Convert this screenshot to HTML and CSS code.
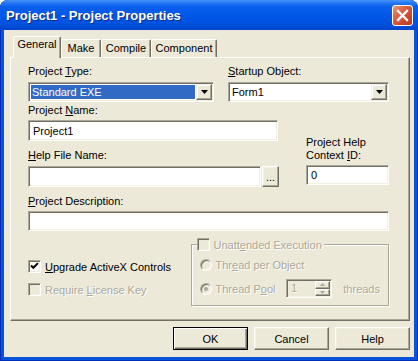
FILE: index.html
```html
<!DOCTYPE html>
<html lang="en">
<head>
    <meta charset="UTF-8">
    <title>Project1 - Project Properties</title>
    <link rel="stylesheet" href="styles.css">
</head>
<body>
<div class="window">
    <div class="titlebar">
        <span class="title">Project1 - Project Properties</span>
        <span class="close">
            <svg width="19" height="19" viewBox="0 0 19 19">
                <path d="M5 5 L14 14 M14 5 L5 14" stroke="#fff" stroke-width="2.3" stroke-linecap="square"/>
            </svg>
        </span>
    </div>

    <div class="client">
        <div class="tabs">
            <div class="tab active tab-general">General</div>
            <div class="tab tab-make">Make</div>
            <div class="tab tab-compile">Compile</div>
            <div class="tab tab-component">Component</div>
        </div>

        <div class="panel">
            <div class="top-row">
                <div class="type-field">
                    <span class="label">Project <u>T</u>ype:</span>
                    <div class="combo sunken">
                        <div class="combo-value selected">Standard EXE</div>
                        <div class="combo-arrow raised">
                            <svg width="7" height="4" viewBox="0 0 7 4"><path d="M0 0 H7 L3.5 4 Z" fill="#000"/></svg>
                        </div>
                    </div>
                </div>
                <div class="startup-field">
                    <span class="label"><u>S</u>tartup Object:</span>
                    <div class="combo sunken">
                        <div class="combo-value">Form1</div>
                        <div class="combo-arrow raised">
                            <svg width="7" height="4" viewBox="0 0 7 4"><path d="M0 0 H7 L3.5 4 Z" fill="#000"/></svg>
                        </div>
                    </div>
                </div>
            </div>

            <div class="mid-row">
                <div class="name-col">
                    <span class="label">Project <u>N</u>ame:</span>
                    <div class="textbox sunken name-box">Project1</div>
                    <span class="label help-label"><u>H</u>elp File Name:</span>
                    <div class="help-row">
                        <div class="textbox sunken help-box"></div>
                        <div class="browse raised">...</div>
                    </div>
                </div>
                <div class="context-col">
                    <span class="label two-lines">Project Help<br>Context <u>I</u>D:</span>
                    <div class="textbox sunken context-box">0</div>
                </div>
            </div>

            <span class="label desc-label"><u>P</u>roject Description:</span>
            <div class="textbox sunken desc-box"></div>

            <div class="bottom-row">
                <div class="checks">
                    <div class="check-row">
                        <span class="checkbox sunken">
                            <svg width="9" height="9" viewBox="0 0 9 9"><path d="M1 3.5 L3.3 5.8 L8 1.1" fill="none" stroke="#000" stroke-width="2"/></svg>
                        </span>
                        <span><u>U</u>pgrade ActiveX Controls</span>
                    </div>
                    <div class="check-row disabled">
                        <span class="checkbox sunken off"></span>
                        <span>Require <u>L</u>icense Key</span>
                    </div>
                </div>

                <fieldset class="frame">
                    <legend>
                        <span class="legend-inner disabled">
                            <span class="checkbox sunken off"></span>
                            <span>Unatt<u>e</u>nded Execution</span>
                        </span>
                    </legend>
                    <div class="radio-row disabled">
                        <span class="radio"></span>
                        <span>Thr<u>e</u>ad per Object</span>
                    </div>
                    <div class="radio-row pool-row disabled">
                        <span class="radio on"></span>
                        <span class="pool-label">Thread P<u>o</u>ol</span>
                        <div class="spin sunken">
                            <span class="spin-value">1</span>
                            <span class="spin-buttons">
                                <span class="spin-btn raised"><svg width="5" height="3" viewBox="0 0 5 3"><path d="M0 3 H5 L2.5 0 Z" fill="#ACA899"/></svg></span>
                                <span class="spin-btn raised"><svg width="5" height="3" viewBox="0 0 5 3"><path d="M0 0 H5 L2.5 3 Z" fill="#ACA899"/></svg></span>
                            </span>
                        </div>
                        <span class="threads">threads</span>
                    </div>
                </fieldset>
            </div>
        </div>

        <div class="buttons">
            <div class="btn raised default">OK</div>
            <div class="btn raised">Cancel</div>
            <div class="btn raised">Help</div>
        </div>
    </div>
</div>
</body>
</html>
```

FILE: styles.css
```css
* {
    box-sizing: border-box;
}
body {
    margin: 0;
    background: #ffffff;
    font-family: Tahoma, "Liberation Sans", sans-serif;
    font-size: 11px;
    color: #000;
}
u {
    text-decoration: underline;
}

/* window frame */
.window {
    width: 418px;
    height: 361px;
    display: flex;
    flex-direction: column;
    background: #0853DC;
    border-radius: 8px 8px 0 0;
    overflow: hidden;
    box-shadow: inset 1px 0 #0030B8, inset -1px 0 #0030B8, inset 0 -1px #0030B8;
}
.titlebar {
    height: 30px;
    flex: none;
    display: flex;
    align-items: center;
    justify-content: space-between;
    padding: 0 5px 0 6px;
    background: linear-gradient(to bottom, #4A98FA 0, #2476F4 3px, #0A5EEC 7px, #0057E6 16px, #0052DE 24px, #0045CA 30px);
}
.title {
    color: #fff;
    font: bold 13px "Liberation Sans", sans-serif;
    text-shadow: 1px 1px 0 #0A2A8C;
    padding-top: 1px;
}
.close {
    width: 21px;
    height: 21px;
    border: 1px solid #fff;
    border-radius: 3px;
    background: linear-gradient(135deg, #EB9A7A 0%, #DA6445 35%, #C8452A 75%, #B93A22 100%);
    display: flex;
    align-items: center;
    justify-content: center;
}
.client {
    flex: 1;
    margin: 0 4px 4px;
    background: #ECE9D8;
    padding: 6px 4px 0 6px;
}

/* 3d borders */
.sunken {
    border: 1px solid;
    border-color: #ACA899 #fff #fff #ACA899;
    box-shadow: inset 1px 1px #716F64, inset -1px -1px #F1EFE2;
}
.raised {
    border: 1px solid;
    border-color: #fff #716F64 #716F64 #fff;
    box-shadow: inset -1px -1px #ACA899, inset 1px 1px #F1EFE2;
    background: #ECE9D8;
}

/* tabs */
.tabs {
    display: flex;
    align-items: flex-end;
    height: 21px;
    padding-left: 3px;
}
.tab {
    height: 18px;
    line-height: 16px;
    text-align: center;
    border: 1px solid;
    border-color: #fff #716F64 transparent #fff;
    border-bottom: none;
    border-radius: 2px 2px 0 0;
    box-shadow: inset -1px 0 #ACA899;
    background: #ECE9D8;
}
.tab.active {
    height: 22px;
    line-height: 14px;
    margin-bottom: -1px;
    position: relative;
    z-index: 1;
}
.tab-general { width: 48px; }
.tab-make { width: 40px; }
.tab-compile { width: 50px; }
.tab-component { width: 66px; }

.panel {
    height: 264px;
    border: 1px solid;
    border-color: #fff #716F64 #716F64 #fff;
    box-shadow: inset -1px -1px #ACA899;
    padding: 7px 20px 0 17px;
}

.label {
    display: block;
    line-height: 13px;
    height: 13px;
    white-space: nowrap;
}
.label.two-lines {
    height: 26px;
}

/* combo boxes */
.top-row {
    display: flex;
}
.type-field {
    width: 186px;
}
.startup-field {
    width: 161px;
    margin-left: 14px;
}
.combo {
    margin-top: 4px;
    height: 20px;
    display: flex;
    padding: 1px;
    background: #fff;
}
.combo-value {
    flex: 1;
    margin: 1px;
    line-height: 14px;
    padding-left: 1px;
    white-space: nowrap;
}
.combo-value.selected {
    background: #316AC5;
    color: #fff;
}
.combo-arrow {
    width: 16px;
    height: 16px;
    display: flex;
    align-items: center;
    justify-content: center;
    border-color: #F1EFE2 #716F64 #716F64 #F1EFE2;
    box-shadow: inset -1px -1px #ACA899, inset 1px 1px #fff;
}

/* text boxes */
.textbox {
    height: 21px;
    display: flex;
    align-items: center;
    padding: 0 3px 0 4px;
    background: #fff;
}
.mid-row {
    display: flex;
    margin-top: 2px;
}
.name-col {
    width: 251px;
}
.name-box {
    margin-top: 3px;
    width: 250px;
}
.help-label {
    margin-top: 8px;
}
.help-row {
    display: flex;
    gap: 1px;
    margin-top: 4px;
}
.help-box {
    width: 233px;
}
.browse {
    width: 17px;
    height: 21px;
    display: flex;
    align-items: flex-end;
    justify-content: center;
    line-height: 14px;
    padding-bottom: 2px;
}
.context-col {
    width: 83px;
    margin-left: auto;
    align-self: flex-end;
    margin-bottom: 2px;
}
.context-box {
    margin-top: 3px;
    height: 20px;
}
.desc-label {
    margin-top: 8px;
}
.desc-box {
    margin-top: 3px;
    height: 20px;
}

/* checks and frame */
.bottom-row {
    display: flex;
    align-items: flex-start;
}
.checks {
    width: 163px;
    margin-top: 29px;
}
.check-row {
    display: flex;
    align-items: center;
    height: 13px;
    white-space: nowrap;
}
.check-row + .check-row {
    margin-top: 10px;
}
.checkbox {
    width: 13px;
    height: 13px;
    flex: none;
    margin-right: 4px;
    background: #fff;
    display: flex;
    align-items: center;
    justify-content: center;
}
.checkbox.off {
    background: #ECE9D8;
}
.disabled {
    color: #ACA899;
    text-shadow: 1px 1px 0 #fff;
}
.frame {
    margin: 7px 0 0;
    width: 199px;
    min-width: 0;
    padding: 6px 8px 7px;
    border: 1px solid #ACA899;
    box-shadow: inset 1px 1px #fff, 1px 1px #fff;
}
.frame legend {
    padding: 0 2px 0 0;
    margin-left: -3px;
    background: #ECE9D8;
}
.legend-inner {
    display: flex;
    align-items: center;
    height: 13px;
    white-space: nowrap;
}
.radio-row {
    display: flex;
    align-items: center;
    height: 16px;
    white-space: nowrap;
}
.pool-row {
    margin-top: 6px;
    height: 19px;
}
.radio {
    width: 12px;
    height: 12px;
    flex: none;
    margin-right: 4px;
    border-radius: 50%;
    border: 1px solid;
    border-color: #ACA899 #fff #fff #ACA899;
    box-shadow: inset 1px 1px #716F64, inset -1px -1px #F1EFE2;
    background: #ECE9D8;
    display: flex;
    align-items: center;
    justify-content: center;
}
.radio.on::after {
    content: "";
    width: 4px;
    height: 4px;
    border-radius: 50%;
    background: #ACA899;
}
.pool-label {
    width: 74px;
}
.spin {
    width: 48px;
    height: 19px;
    display: flex;
    padding: 1px;
    background: #ECE9D8;
}
.spin-value {
    flex: 1;
    padding-left: 3px;
    line-height: 15px;
}
.spin-buttons {
    width: 15px;
    display: flex;
    flex-direction: column;
}
.spin-btn {
    flex: 1;
    display: flex;
    align-items: center;
    justify-content: center;
}
.threads {
    margin-left: 11px;
}

/* dialog buttons */
.buttons {
    display: flex;
    justify-content: flex-end;
    gap: 6px;
    margin-top: 6px;
}
.btn {
    width: 75px;
    height: 23px;
    display: flex;
    align-items: center;
    justify-content: center;
}
.btn.default {
    border-color: #000;
    box-shadow: inset 1px 1px #fff, inset -1px -1px #716F64, inset -2px -2px #ACA899;
}
```
